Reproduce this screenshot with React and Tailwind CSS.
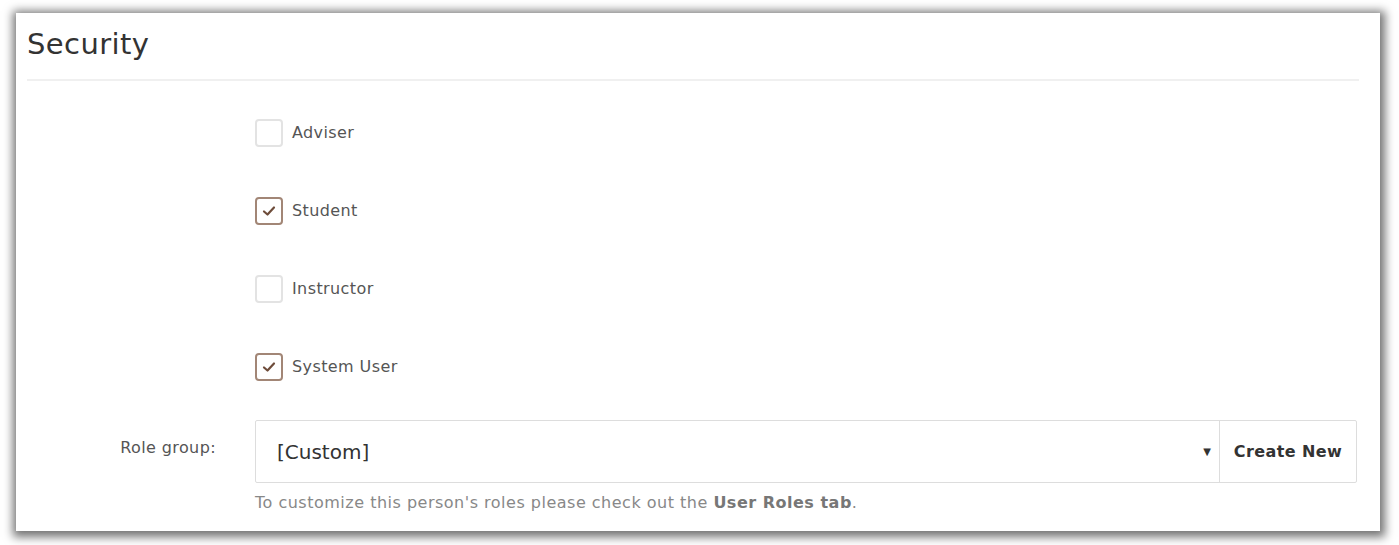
import React from 'react';

const roles = [
  { label: 'Adviser', checked: false },
  { label: 'Student', checked: true },
  { label: 'Instructor', checked: false },
  { label: 'System User', checked: true },
];

const RoleCheckbox = ({ label, checked }) => (
  <label className="flex items-center h-[28px]">
    <span
      className={
        checked
          ? 'w-[28px] h-[28px] rounded-[4px] border-2 border-[#a28676] flex items-center justify-center bg-white'
          : 'w-[28px] h-[28px] rounded-[4px] border-2 border-[#e3e3e3] bg-white'
      }
    >
      {checked && (
        <svg width="14" height="12" viewBox="0 0 14 12">
          <path d="M2 6.5 L5.5 9.5 L12 2.5" fill="none" stroke="#6e4c3a" strokeWidth="2.2" strokeLinecap="round" strokeLinejoin="round" />
        </svg>
      )}
    </span>
    <span className="ml-[9px] text-[16px] tracking-[0.4px] text-[#555]">{label}</span>
  </label>
);

const App = () => {
  return (
    <div className="w-[1399px] h-[545px] bg-white pt-[13px] pl-[16px]" style={{ fontFamily: '"DejaVu Sans", Verdana, sans-serif' }}>
      <div className="w-[1364px] h-[518px] bg-white shadow-[1px_2px_9px_4px_rgba(0,0,0,0.55)] px-[11px]">
        <h2 className="text-[29px] tracking-[0.4px] leading-none text-[#333] pt-[17px] pb-[20px] border-b-2 border-[#f0f0f0] mr-[10px]">Security</h2>

        <div className="pl-[228px] pt-[38px] flex flex-col gap-[50px]">
          {roles.map((r) => (
            <RoleCheckbox key={r.label} label={r.label} checked={r.checked} />
          ))}
        </div>

        <div className="flex mt-[39px]">
          <div className="w-[228px] pr-[39px] pt-[16px] text-right text-[16px] tracking-[0.4px] text-[#555]">Role group:</div>
          <div className="flex-1 mr-[12px]">
            <div className="flex h-[63px] border border-[#ddd] rounded-[2px]">
              <div className="flex-1 flex items-center pl-[21px] pr-[8px]">
                <span className="flex-1 text-[20px] text-[#333]">[Custom]</span>
                <span className="text-[10px] text-[#333]">▼</span>
              </div>
              <button className="w-[137px] border-l border-[#ddd] text-[16px] tracking-[0.4px] font-bold text-[#333]">Create New</button>
            </div>
            <p className="mt-[8px] text-[16px] tracking-[0.5px] text-[#888]">
              To customize this person's roles please check out the <span className="font-bold text-[#777]">User Roles tab</span>.
            </p>
          </div>
        </div>
      </div>
    </div>
  );
};

export default App;
